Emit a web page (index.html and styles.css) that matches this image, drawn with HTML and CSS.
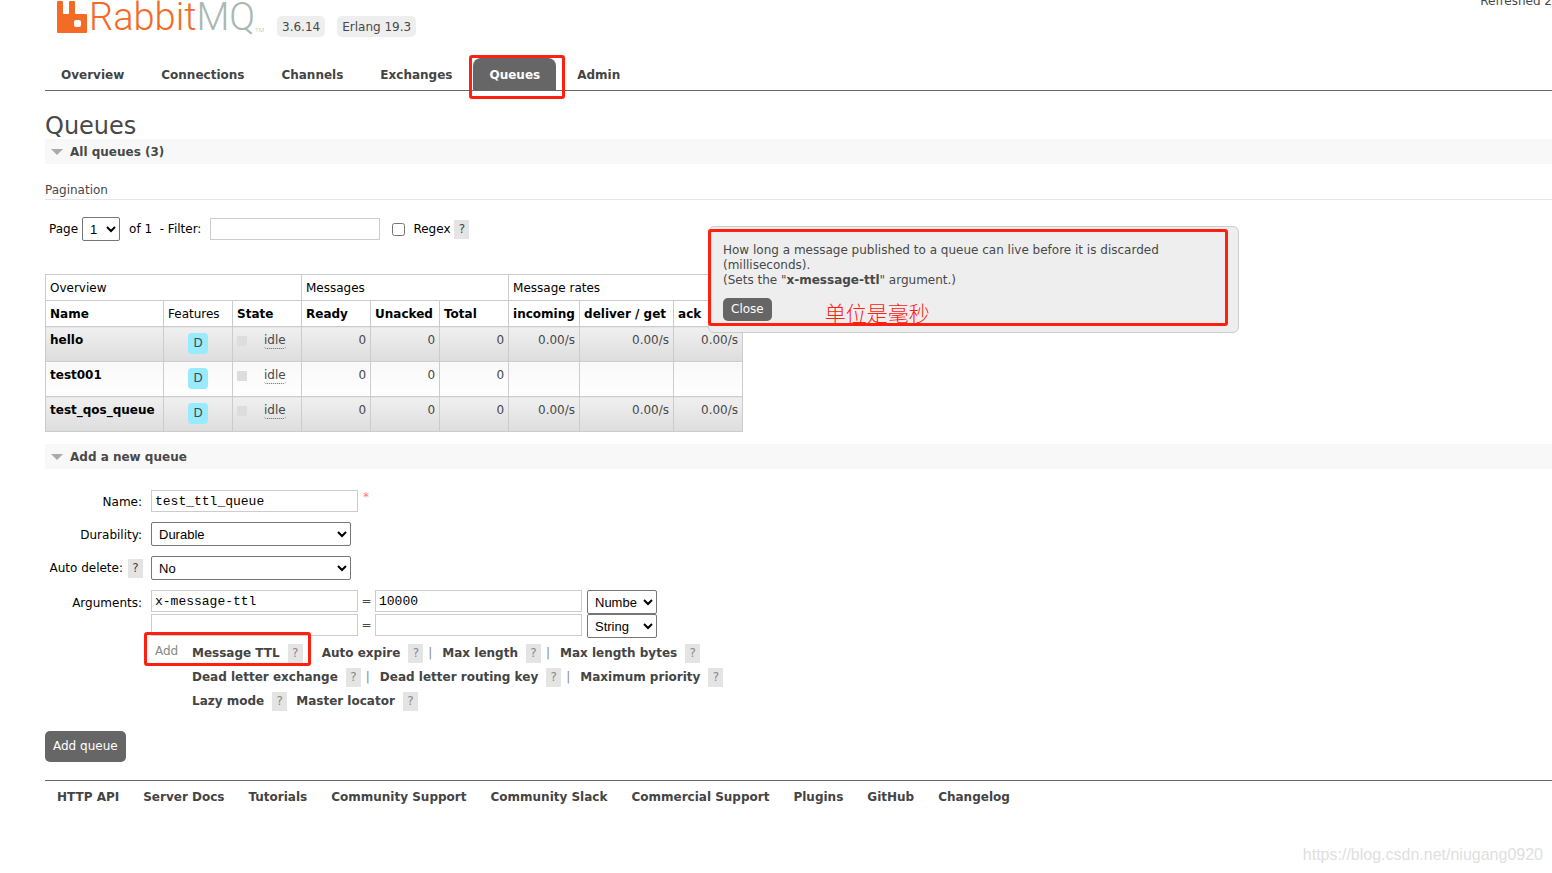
FILE: index.html
```
<!DOCTYPE html>
<html lang="en">
<head>
    <meta charset="UTF-8">
    <meta name="viewport" content="width=device-width, initial-scale=1.0">
    <title>RabbitMQ Management</title>
    <link rel="stylesheet" href="styles.css">
</head>
<body>

    <!-- ===== HEADER ===== -->
    <header class="header">
        <a href="#" class="logo" aria-label="RabbitMQ">
            <svg class="logo-mark" viewBox="0 0 30 33" width="30" height="33">
                <path fill="#f36b25" fill-rule="evenodd" d="M1 0h4q1 0 1 1v11q0 1 1 1h4q1 0 1-1V1q0-1 1-1h4q1 0 1 1v11q0 1 1 1h10q1 0 1 1v17q0 1-1 1H1q-1 0-1-1V1q0-1 1-1zM19 19q-2 0-2 2v3q0 2 2 2h3q2 0 2-2v-3q0-2-2-2z"/>
            </svg>
            <span class="logo-rabbit">Rabbit</span><span class="logo-mq">MQ</span><span class="logo-tm">TM</span>
        </a>
        <span class="version">3.6.14</span>
        <span class="version">Erlang 19.3</span>
        <span class="refreshed">Refreshed 2</span>
    </header>

    <nav class="tabs">
        <a href="#">Overview</a>
        <a href="#">Connections</a>
        <a href="#">Channels</a>
        <a href="#">Exchanges</a>
        <a href="#" class="selected">Queues<span class="mark mark-tab"></span></a>
        <a href="#">Admin</a>
    </nav>

    <main>
        <h1>Queues</h1>

        <!-- ===== ALL QUEUES ===== -->
        <h2>All queues (3)</h2>
        <h3>Pagination</h3>
        <form class="pagination">
            <label for="page">Page</label>
            <select id="page"><option>1</option></select>
            <label for="filter" class="filter-label">of 1 &nbsp;- Filter:</label>
            <input type="text" id="filter">
            <input type="checkbox" id="regex">
            <label for="regex">Regex</label>
            <button type="button" class="help">?</button>
        </form>

        <table class="queues">
            <colgroup>
                <col class="c-name"><col class="c-std"><col class="c-std"><col class="c-std"><col class="c-std"><col class="c-std"><col class="c-in"><col class="c-get"><col class="c-std">
            </colgroup>
            <thead>
                <tr class="groups">
                    <th colspan="3">Overview</th>
                    <th colspan="3">Messages</th>
                    <th colspan="3">Message rates</th>
                </tr>
                <tr>
                    <th>Name</th>
                    <th class="plain">Features</th>
                    <th>State</th>
                    <th>Ready</th>
                    <th>Unacked</th>
                    <th>Total</th>
                    <th>incoming</th>
                    <th>deliver / get</th>
                    <th>ack</th>
                </tr>
            </thead>
            <tbody>
                <tr class="alt">
                    <td><a href="#">hello</a></td>
                    <td class="features"><span class="durable">D</span></td>
                    <td><div class="state"><abbr>idle</abbr></div></td>
                    <td class="r">0</td><td class="r">0</td><td class="r">0</td>
                    <td class="r">0.00/s</td><td class="r">0.00/s</td><td class="r">0.00/s</td>
                </tr>
                <tr>
                    <td><a href="#">test001</a></td>
                    <td class="features"><span class="durable">D</span></td>
                    <td><div class="state"><abbr>idle</abbr></div></td>
                    <td class="r">0</td><td class="r">0</td><td class="r">0</td>
                    <td></td><td></td><td></td>
                </tr>
                <tr class="alt">
                    <td><a href="#">test_qos_queue</a></td>
                    <td class="features"><span class="durable">D</span></td>
                    <td><div class="state"><abbr>idle</abbr></div></td>
                    <td class="r">0</td><td class="r">0</td><td class="r">0</td>
                    <td class="r">0.00/s</td><td class="r">0.00/s</td><td class="r">0.00/s</td>
                </tr>
            </tbody>
        </table>

        <!-- ===== ADD A QUEUE ===== -->
        <h2>Add a new queue</h2>
        <form class="add-queue">
            <div class="row">
                <label for="name">Name:</label>
                <div class="field"><input type="text" id="name" value="test_ttl_queue"><span class="mand">*</span></div>
            </div>
            <div class="row">
                <label for="durability">Durability:</label>
                <div class="field"><select id="durability" class="wide"><option>Durable</option></select></div>
            </div>
            <div class="row">
                <div class="label-help"><label for="auto-delete">Auto delete:</label><button type="button" class="help">?</button></div>
                <div class="field"><select id="auto-delete" class="wide"><option>No</option></select></div>
            </div>
            <div class="row row-args">
                <label for="arg-key">Arguments:</label>
                <div>
                    <div class="arg">
                        <input type="text" id="arg-key" value="x-message-ttl"><span class="eq">=</span><input type="text" aria-label="Value" value="10000">
                        <select aria-label="Type"><option>Number</option></select>
                    </div>
                    <div class="arg">
                        <input type="text" aria-label="Argument"><span class="eq">=</span><input type="text" aria-label="Value">
                        <select aria-label="Type"><option>String</option></select>
                    </div>
                    <div class="hints">
                        <span class="hints-add">Add</span>
                        <div>
                            <div class="hint-line">
                                <a href="#">Message TTL</a><button type="button" class="help">?</button><span class="sep"></span>
                                <a href="#">Auto expire</a><button type="button" class="help">?</button><span class="sep">|</span>
                                <a href="#">Max length</a><button type="button" class="help">?</button><span class="sep">|</span>
                                <a href="#">Max length bytes</a><button type="button" class="help">?</button>
                            </div>
                            <div class="hint-line">
                                <a href="#">Dead letter exchange</a><button type="button" class="help">?</button><span class="sep">|</span>
                                <a href="#">Dead letter routing key</a><button type="button" class="help">?</button><span class="sep">|</span>
                                <a href="#">Maximum priority</a><button type="button" class="help">?</button>
                            </div>
                            <div class="hint-line">
                                <a href="#">Lazy mode</a><button type="button" class="help">?</button><span class="sep-space"></span>
                                <a href="#">Master locator</a><button type="button" class="help">?</button>
                            </div>
                        </div>
                        <span class="mark mark-ttl"></span>
                    </div>
                </div>
            </div>
            <button type="submit" class="btn btn-add">Add queue</button>
        </form>
    </main>

    <footer class="footer">
        <a href="#">HTTP API</a>
        <a href="#">Server Docs</a>
        <a href="#">Tutorials</a>
        <a href="#">Community Support</a>
        <a href="#">Community Slack</a>
        <a href="#">Commercial Support</a>
        <a href="#">Plugins</a>
        <a href="#">GitHub</a>
        <a href="#">Changelog</a>
    </footer>

    <!-- ===== HELP POPUP ===== -->
    <div class="popup" role="dialog">
        <p>How long a message published to a queue can live before it is discarded (milliseconds).<br>(Sets the "<b>x-message-ttl</b>" argument.)</p>
        <div class="popup-foot">
            <button type="button" class="btn">Close</button>
            <span class="note" lang="zh">单位是毫秒</span>
        </div>
        <span class="mark mark-popup"></span>
    </div>

    <div class="watermark">https://blog.csdn.net/niugang0920</div>
</body>
</html>
```
FILE: styles.css
```
* { box-sizing: border-box; }

body {
    margin: 0;
    padding-left: 45px;
    position: relative;
    min-height: 100vh;
    overflow: hidden;
    background: #fff;
    color: #484848;
    font: 12px/15px Verdana, "DejaVu Sans", sans-serif;
}
a { color: #444; font-weight: bold; text-decoration: none; }
input, select, button { font: inherit; margin: 0; }

/* --- Header --- */
.header {
    display: flex;
    align-items: flex-start;
    height: 58px;
    padding-left: 12px;
}
.logo {
    display: flex;
    align-items: flex-end;
    width: 208px;
    height: 34px;
    margin-right: 12px;
    font: 300 38px/34px Roboto, sans-serif;
}
.logo-mark { flex: none; margin-right: 2px; }
.logo-rabbit { color: #f36b25; }
.logo-mq { color: #a9b8b0; }
.logo-tm { color: #a9b8b0; font-size: 6px; line-height: 8px; }
.version {
    margin: 16px 12px 0 0;
    padding: 4px 5px 2px;
    border-radius: 5px;
    background: #eee;
}
.refreshed { margin: -6px 0 0 auto; white-space: nowrap; }

/* --- Tabs --- */
.tabs {
    display: flex;
    gap: 5px;
    border-bottom: 1px solid #666;
}
.tabs a {
    position: relative;
    padding: 10px 16px 7px;
    border-radius: 8px 8px 0 0;
}
.tabs .selected { background: #666; color: #fff; }

/* red frames drawn over the page */
.mark {
    position: absolute;
    border: 3px solid #ff2010;
    border-radius: 3px;
    pointer-events: none;
}
.mark-tab { inset: -3px -9px -9px -4px; }
.mark-ttl { left: -7px; top: -6px; width: 167px; height: 34px; }
.mark-popup { left: -1px; top: 2px; right: 10px; bottom: 6px; }

/* --- Headings --- */
h1 { margin: 22px 0 0; font-size: 24px; line-height: 26px; font-weight: normal; }
h2 {
    display: flex;
    align-items: center;
    margin: 0;
    height: 25px;
    padding: 1px 0 0 6px;
    background: #f8f8f8;
    font-size: 12px;
}
h2::before {
    content: "";
    margin-right: 7px;
    border: 6px solid transparent;
    border-top-color: #aaa;
    border-bottom: 0;
}
h3 {
    margin: 19px 0 17px;
    padding-bottom: 1px;
    border-bottom: 1px solid #e4e4e4;
    font-size: 12px;
    font-weight: normal;
}

/* --- Form controls --- */
input[type="text"] {
    width: 207px;
    height: 22px;
    padding: 2px 3px;
    border: 1px solid #ccc;
    color: #000;
    font: 13px "Courier New", "Liberation Mono", monospace;
}
select {
    height: 24px;
    padding: 0 3px;
    border: 1px solid #767676;
    border-radius: 2px;
    background: #fff;
    color: #000;
    font: 13px Arial, "Liberation Sans", sans-serif;
}
label { color: #000; }
.help {
    width: 15px;
    height: 19px;
    padding: 0;
    border: 0;
    background: #e4e4e4;
    color: #444;
}
.btn {
    border: 0;
    border-radius: 5px;
    padding: 4px 8px;
    background: #666;
    color: #fff;
}

.pagination { display: flex; align-items: center; padding-left: 4px; height: 24px; }
.pagination select { width: 38px; margin: 0 9px 0 4px; }
.pagination #filter { width: 170px; margin: 0 12px 0 9px; }
.pagination #regex { width: 13px; height: 13px; margin-right: 8px; }
.pagination .help { margin-left: 4px; }

/* --- Queue table --- */
.queues {
    width: 698px;
    margin: 33px 0 12px;
    border-collapse: collapse;
    table-layout: fixed;
}
.c-name { width: 118px; }
.c-std { width: 69px; }
.c-in { width: 71px; }
.c-get { width: 94px; }
.queues th, .queues td {
    padding: 6px 4px 4px;
    border: 1px solid #ccc;
    text-align: left;
    vertical-align: top;
    white-space: nowrap;
}
.queues th { height: 26px; color: #000; }
.queues .groups th, .queues .plain { font-weight: normal; }
.queues td { height: 35px; background: linear-gradient(#f8f8f8, #fff); }
.queues .alt td { background: linear-gradient(#f0f0f0, #ddd); }
.queues td a { color: #000; }
.queues .r { text-align: right; }
.queues .features { text-align: center; }
.durable {
    display: inline-block;
    padding: 3px 5px;
    border-radius: 4px;
    background: #98ebff;
}
.state { display: flex; align-items: center; gap: 17px; }
.state::before { content: ""; width: 10px; height: 10px; background: #ddd; }
.state abbr { border-bottom: 1px dotted #666; border-radius: 3px; }

/* --- Add queue form --- */
.add-queue { padding-top: 21px; }
.row {
    display: grid;
    grid-template-columns: 97px 1fr;
    column-gap: 9px;
    align-items: center;
    margin-bottom: 10px;
    text-align: right;
}
.row > label { padding-top: 2px; }
.row-args { align-items: start; }
.row-args > label { padding-top: 6px; }
.label-help { display: flex; justify-content: flex-end; align-items: center; gap: 5px; margin-right: -1px; }
.field, .arg { display: flex; }
.wide { width: 200px; }
.mand { margin-left: 5px; color: #f77; }
.arg { height: 24px; }
.arg select { width: 70px; margin-left: 5px; }
.eq { width: 17px; line-height: 22px; text-align: center; }
.hints {
    display: flex;
    position: relative;
    padding-left: 4px;
    color: #888;
    text-align: left;
}
.hints-add { width: 37px; padding-top: 6px; }
.hint-line { display: flex; align-items: center; height: 24px; padding-top: 6px; }
.hint-line .help { margin-left: 8px; color: #888; }
.sep { width: 19px; padding-left: 5px; }
.sep-space { width: 9px; }
.btn-add { height: 31px; margin-top: 11px; }

/* --- Footer --- */
.footer {
    display: flex;
    gap: 24px;
    margin-top: 18px;
    padding: 9px 12px;
    border-top: 1px solid #666;
}

/* --- Popup --- */
.popup {
    position: absolute;
    left: 708px;
    top: 226px;
    width: 531px;
    padding: 16px 14px 11px;
    border: 1px solid #ccc;
    border-radius: 6px;
    background: #eee;
}
.popup p { width: 460px; margin: 0 0 10px; }
.popup-foot { display: flex; height: 23px; }
.note {
    margin-left: 53px;
    color: #ff2010;
    font: 21px/28px "Noto Sans CJK SC", sans-serif;
    font-weight: 300;
}
.watermark {
    position: absolute;
    right: 9px;
    bottom: 9px;
    color: #e0e0e0;
    font: 16px/18px Arial, "Liberation Sans", sans-serif;
}
```
